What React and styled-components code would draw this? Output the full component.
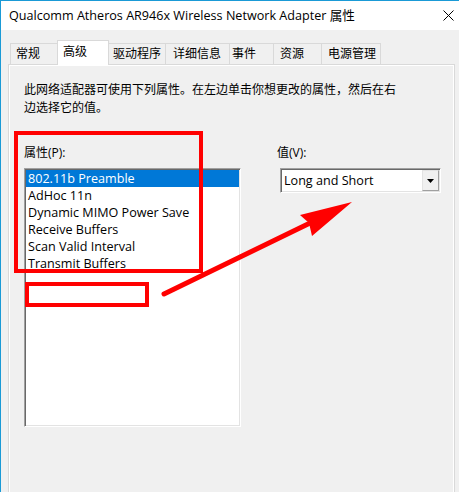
import React from "react";
import styled, { createGlobalStyle } from "styled-components";

const Global = createGlobalStyle`
  html, body { margin: 0; padding: 0; background: #f0f0f0; overflow: hidden; }
  body { font-family: "Open Sans", "Noto Sans CJK SC", sans-serif; color: #000; }
  * { box-sizing: border-box; }
`;

const Window = styled.div`
  position: relative;
  width: 459px;
  height: 492px;
  border-left: 1px solid #1a9ad6;
  border-top: 1px solid #1a9ad6;
  background: #f0f0f0;
  overflow: hidden;
`;

const TitleBar = styled.div`
  height: 29px;
  background: #fff;
  display: flex;
  align-items: center;
  justify-content: space-between;
  padding: 0 5px 0 8px;
  font-size: 12.6px;
  line-height: 16px;
`;

const Body = styled.div`
  padding: 10px 0 0 7px;
`;

const TabRow = styled.div`
  display: flex;
  align-items: flex-end;
  height: 25px;
  margin: 0 0 -1px 2px;
  position: relative;
  z-index: 1;
`;

const Tab = styled.div`
  width: ${(p) => p.w}px;
  height: ${(p) => (p.active ? 25 : 21)}px;
  margin-bottom: ${(p) => (p.active ? 0 : 1)}px;
  margin-left: ${(p) => (p.first ? 0 : -1)}px;
  padding-left: ${(p) => p.pad}px;
  padding-top: ${(p) => (p.active ? 2 : 1)}px;
  border: 1px solid #d9d9d9;
  border-bottom: none;
  background: ${(p) => (p.active ? "#fff" : "#f0f0f0")};
  position: relative;
  z-index: ${(p) => (p.active ? 2 : 1)};
  font-size: 12px;
  line-height: 18px;
  white-space: nowrap;
`;

const Panel = styled.div`
  width: 447px;
  height: 480px;
  border: 1px solid #d9d9d9;
  box-shadow: inset 0 0 0 1px #fff;
  background: #f0f0f0;
  padding: 16px 0 0 15px;
`;

const Desc = styled.div`
  width: 380px;
  font-size: 12px;
  line-height: 18px;
`;

const Columns = styled.div`
  display: flex;
  gap: 36px;
  margin-top: 27px;
`;

const Column = styled.div`
  display: flex;
  flex-direction: column;
  width: ${(p) => p.w}px;
`;

const Label = styled.div`
  font-size: 12px;
  line-height: 18px;
  margin-bottom: 6px;
`;

const Sunken = styled.div`
  border-top: 1px solid #a0a0a0;
  border-left: 1px solid #a0a0a0;
  border-bottom: 1px solid #fff;
  border-right: 1px solid #fff;
  box-shadow: inset 1px 1px 0 #696969, inset -1px -1px 0 #e3e3e3;
  background: #fff;
`;

const ListBox = styled(Sunken)`
  width: 217px;
  height: 259px;
  padding: 1px;
`;

const Item = styled.div`
  height: 17px;
  line-height: 17px;
  padding-left: 2px;
  font-size: 12.6px;
  white-space: nowrap;
  background: ${(p) => (p.selected ? "#0078d7" : "transparent")};
  color: ${(p) => (p.selected ? "#fff" : "#000")};
`;

const Combo = styled(Sunken)`
  margin-left: 3px;
  width: 161px;
  height: 25px;
  display: flex;
  align-items: stretch;
  padding: 1px;
`;

const ComboText = styled.div`
  flex: 1;
  font-size: 12.6px;
  line-height: 21px;
  padding-left: 2px;
`;

const DropButton = styled.div`
  width: 17px;
  background: #f0f0f0;
  border-top: 1px solid #e3e3e3;
  border-left: 1px solid #e3e3e3;
  border-right: 1px solid #a0a0a0;
  border-bottom: 1px solid #a0a0a0;
  display: flex;
  align-items: center;
  justify-content: center;
`;

const Overlay = styled.svg`
  position: absolute;
  left: -1px;
  top: -1px;
  width: 459px;
  height: 492px;
  pointer-events: none;
`;

const tabs = [
  { t: "常规", w: 48, pad: 5 },
  { t: "高级", w: 52, pad: 5, active: true },
  { t: "驱动程序", w: 58, pad: 4 },
  { t: "详细信息", w: 65, pad: 7 },
  { t: "事件", w: 45, pad: 2 },
  { t: "资源", w: 49, pad: 6 },
  { t: "电源管理", w: 60, pad: 6 },
];

const items = [
  "802.11b Preamble",
  "AdHoc 11n",
  "Dynamic MIMO Power Save",
  "Receive Buffers",
  "Scan Valid Interval",
  "Transmit Buffers",
];

export default function App() {
  return (
    <>
      <Global />
      <Window>
        <TitleBar>
          <span>Qualcomm Atheros AR946x Wireless Network Adapter 属性</span>
          <svg width="11" height="11" viewBox="0 0 11 11">
            <path d="M0.5 0.5 L10.5 10.5 M10.5 0.5 L0.5 10.5" stroke="#000" strokeWidth="1" />
          </svg>
        </TitleBar>
        <Body>
          <TabRow>
            {tabs.map((t, i) => (
              <Tab key={t.t} w={t.w} pad={t.pad} active={t.active} first={i === 0}>
                {t.t}
              </Tab>
            ))}
          </TabRow>
          <Panel>
            <Desc>此网络适配器可使用下列属性。在左边单击你想更改的属性，然后在右边选择它的值。</Desc>
            <Columns>
              <Column w={217}>
                <Label>属性(P):</Label>
                <ListBox>
                  {items.map((it, i) => (
                    <Item key={it} selected={i === 0}>
                      {it}
                    </Item>
                  ))}
                </ListBox>
              </Column>
              <Column w={164}>
                <Label>值(V):</Label>
                <Combo>
                  <ComboText>Long and Short</ComboText>
                  <DropButton>
                    <svg width="7" height="4" viewBox="0 0 7 4">
                      <path d="M0 0 H7 L3.5 4 Z" fill="#000" />
                    </svg>
                  </DropButton>
                </Combo>
              </Column>
            </Columns>
          </Panel>
        </Body>
        <Overlay viewBox="0 0 459 492">
          <rect x="16" y="133" width="185" height="138" fill="none" stroke="#ff0000" strokeWidth="4" />
          <rect x="27" y="284" width="120" height="21" fill="none" stroke="#ff0000" strokeWidth="4" />
          <line x1="164" y1="294" x2="308" y2="224" stroke="#ff0000" strokeWidth="5" strokeLinecap="round" />
          <polygon points="352,202 300,215 309,223 312,236" fill="#ff0000" />
        </Overlay>
      </Window>
    </>
  );
}
